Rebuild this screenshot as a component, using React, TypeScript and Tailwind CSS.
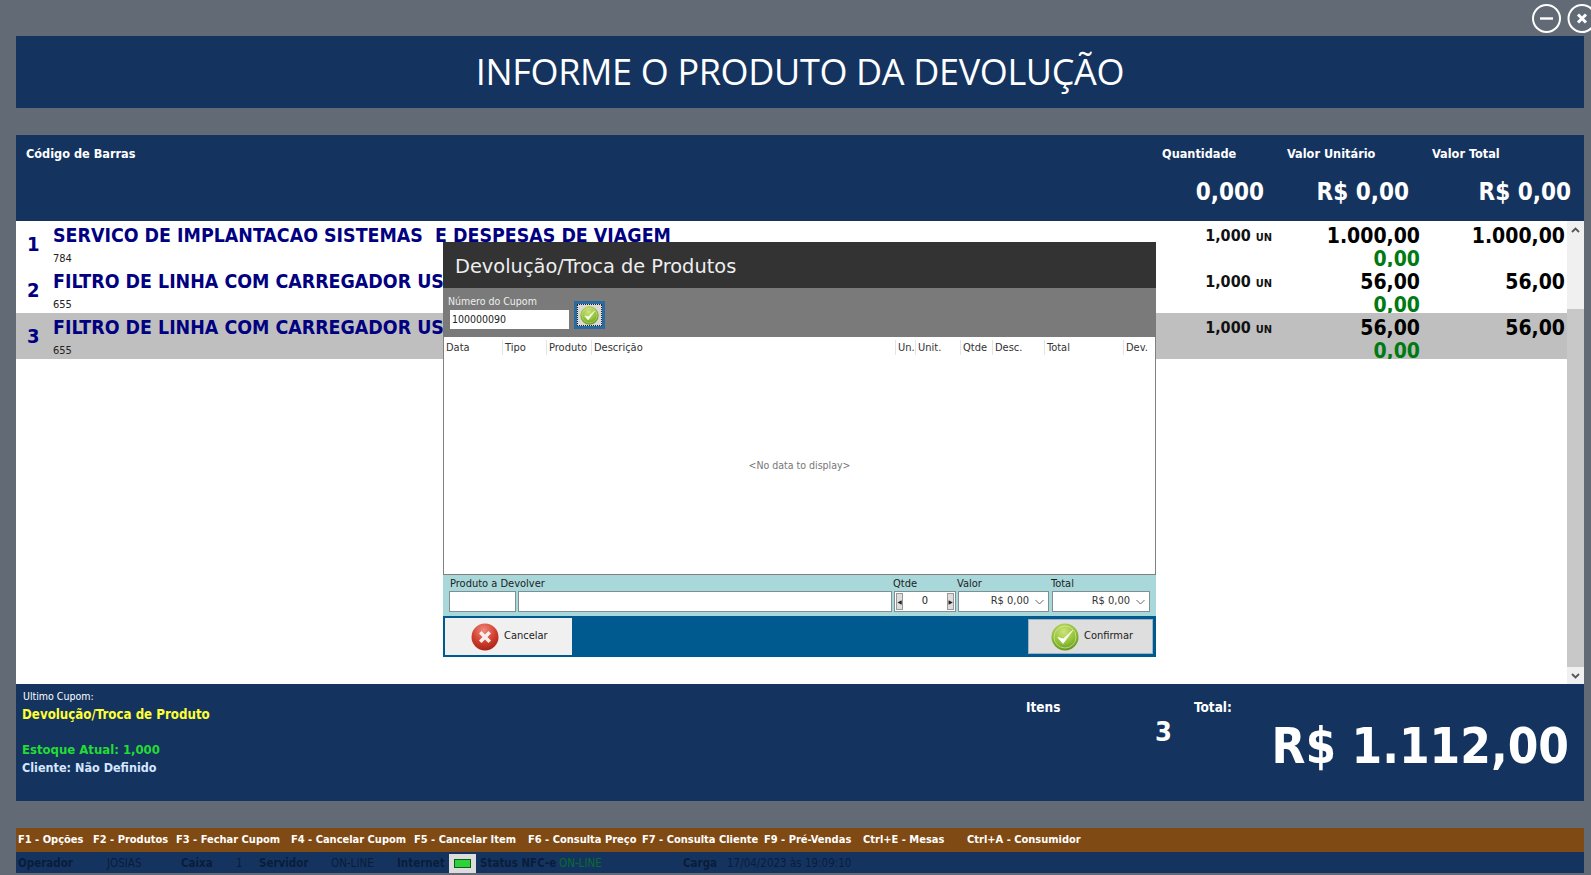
import React from "react";

const rows = [
  { n: "1", name: "SERVICO DE IMPLANTACAO SISTEMAS  E DESPESAS DE VIAGEM", code: "784", unit: "1.000,00", total: "1.000,00" },
  { n: "2", name: "FILTRO DE LINHA COM CARREGADOR USB", code: "655", unit: "56,00", total: "56,00" },
  { n: "3", name: "FILTRO DE LINHA COM CARREGADOR USB", code: "655", unit: "56,00", total: "56,00", selected: true },
];

const columns = [
  { label: "Data", className: "w-[59px]" },
  { label: "Tipo", className: "w-[44px]" },
  { label: "Produto", className: "w-[45px]" },
  { label: "Descrição", className: "w-[304px]" },
  { label: "Un.", className: "w-[20px]" },
  { label: "Unit.", className: "w-[45px]" },
  { label: "Qtde", className: "w-[32px]" },
  { label: "Desc.", className: "w-[52px]" },
  { label: "Total", className: "w-[79px]" },
  { label: "Dev.", className: "flex-1" },
];

const shortcuts = [
  { label: "F1 - Opções", className: "w-[75px]" },
  { label: "F2 - Produtos", className: "w-[83px]" },
  { label: "F3 - Fechar Cupom", className: "w-[115px]" },
  { label: "F4 - Cancelar Cupom", className: "w-[123px]" },
  { label: "F5 - Cancelar Item", className: "w-[114px]" },
  { label: "F6 - Consulta Preço", className: "w-[114px]" },
  { label: "F7 - Consulta Cliente", className: "w-[122px]" },
  { label: "F9 - Pré-Vendas", className: "w-[99px]" },
  { label: "Ctrl+E - Mesas", className: "w-[104px]" },
  { label: "Ctrl+A - Consumidor", className: "" },
];

const CheckIcon = ({ size, id }: { size: number; id: string }) => (
  <svg width={size} height={size} viewBox="0 0 28 28">
    <defs>
      <radialGradient id={id} cx="45%" cy="30%" r="75%">
        <stop offset="0%" stopColor="#cfe57a" />
        <stop offset="60%" stopColor="#8fbf34" />
        <stop offset="100%" stopColor="#5c8f1c" />
      </radialGradient>
    </defs>
    <circle cx="14" cy="14" r="13.5" fill={`url(#${id})`} />
    <circle cx="14" cy="14" r="11" fill="none" stroke="#e4f0b8" strokeOpacity="0.6" />
    <path d="M7 14.5l5 6 9.5-13-9.2 8.4z" fill="#fff" stroke="#f4f8e6" strokeWidth="1" strokeLinejoin="round" />
  </svg>
);

const CancelIcon = () => (
  <svg width="28" height="28" viewBox="0 0 28 28">
    <defs>
      <radialGradient id="redBall" cx="45%" cy="25%" r="80%">
        <stop offset="0%" stopColor="#ee8a7c" />
        <stop offset="55%" stopColor="#d2402f" />
        <stop offset="100%" stopColor="#a31e14" />
      </radialGradient>
    </defs>
    <circle cx="14" cy="14" r="13.5" fill="url(#redBall)" />
    <path d="M8 10.5l2.5-2.5 3.5 3.5 3.5-3.5 2.5 2.5-3.5 3.5 3.5 3.5-2.5 2.5-3.5-3.5-3.5 3.5-2.5-2.5 3.5-3.5z" fill="#f7eeee" />
  </svg>
);

const WindowButtons = () => (
  <div className="flex justify-end gap-[6px] -mr-[13px] pt-[4px] h-[36px]">
    <svg width="29" height="29" viewBox="0 0 29 29">
      <circle cx="14.5" cy="14.5" r="13.5" fill="none" stroke="#fff" strokeWidth="2" />
      <path d="M8 14.5h13" stroke="#fff" strokeWidth="2.4" />
    </svg>
    <svg width="30" height="29" viewBox="0 0 30 29">
      <circle cx="15" cy="14.5" r="13.5" fill="none" stroke="#fff" strokeWidth="2" />
      <path d="M11 10.5l8 8M19 10.5l-8 8" stroke="#fff" strokeWidth="3" />
    </svg>
  </div>
);

const ComboField = ({ value, className }: { value: string; className: string }) => (
  <div className={`flex items-center justify-end gap-[6px] h-[21px] bg-white border border-[#7f8f93] pr-[4px] text-[11px] text-[#333] ${className}`}>
    <span>{value}</span>
    <svg width="9" height="6" viewBox="0 0 9 6">
      <path d="M0.5 1l4 4 4-4" fill="none" stroke="#666" />
    </svg>
  </div>
);

const DevolucaoModal = () => (
  <div className="absolute left-[443px] top-[242px] w-[713px] h-[415px] flex flex-col">
    <div className="h-[46px] shrink-0 bg-[#333333] pl-[12px] pt-[3px] flex items-center text-[19.4px] text-[#eeeeee] font-['DejaVu_Sans',sans-serif]">
      Devolução/Troca de Produtos
    </div>
    <div className="h-[49px] shrink-0 bg-[#7a7a7a] flex items-start pl-[5px]">
      <div className="flex flex-col pt-[7px]">
        <span className="text-[10.5px] leading-[13px] text-[#eeeeee]">Número do Cupom</span>
        <div className="ml-[2px] mt-[2px] w-[119px] h-[19px] bg-white pl-[2px] text-[10.5px] leading-[19px] text-[#222]">100000090</div>
      </div>
      <div className="ml-[5px] mt-[13px] w-[31px] h-[28px] border-[3px] border-[#2a6a9e] bg-[#d9d9d9] outline-1 -outline-offset-4 outline-dotted outline-[#222] flex items-center justify-center">
        <CheckIcon size={19} id="greenSmall" />
      </div>
    </div>
    <div className="flex-1 flex flex-col bg-white border-x border-b border-[#808080]">
      <div className="h-[18px] flex text-[11px] leading-[15px] pt-[3px] text-[#333]">
        {columns.map((c) => (
          <div key={c.label} className={`pl-[2px] border-r border-[#e4e4e4] last:border-r-0 ${c.className}`}>
            {c.label}
          </div>
        ))}
      </div>
      <div className="flex-1 flex items-center justify-center pt-[2px] text-[10.5px] text-[#777]">{"<No data to display>"}</div>
    </div>
    <div className="h-[41px] shrink-0 bg-[#a9d8db] px-[6px] pt-[2px] text-[11px] text-[#222]">
      <div className="h-[14px] flex leading-[14px]">
        <span className="w-[444px] pl-[1px]">Produto a Devolver</span>
        <span className="w-[64px]">Qtde</span>
        <span className="w-[94px]">Valor</span>
        <span>Total</span>
      </div>
      <div className="flex gap-[2px]">
        <div className="w-[67px] h-[21px] bg-white border border-[#7f8f93]" />
        <div className="w-[374px] h-[21px] bg-white border border-[#7f8f93]" />
        <div className="w-[62px] h-[21px] bg-white border border-[#7f8f93] flex items-center justify-between px-[1px]">
          <span className="w-[7px] h-[17px] bg-[#dddddd] border border-[#999] flex items-center justify-center text-[6px] leading-none">◀</span>
          <span>0</span>
          <span className="w-[7px] h-[17px] bg-[#dddddd] border border-[#999] flex items-center justify-center text-[6px] leading-none">▶</span>
        </div>
        <ComboField value="R$ 0,00" className="w-[91px]" />
        <ComboField value="R$ 0,00" className="w-[98px] ml-[1px]" />
      </div>
    </div>
    <div className="h-[41px] shrink-0 bg-[#005a8f] flex items-center justify-between pl-[2px] pr-[3px] text-[11px] text-[#222]">
      <button className="w-[127px] h-[37px] bg-[#f0f0f0] flex items-center pl-[26px] gap-[5px]">
        <CancelIcon />
        Cancelar
      </button>
      <button className="w-[125px] h-[35px] bg-[#dedede] border border-[#a0b4c4] flex items-center pl-[22px] gap-[5px]">
        <CheckIcon size={28} id="greenBig" />
        Confirmar
      </button>
    </div>
  </div>
);

const ItemRow = ({ row }: { row: (typeof rows)[number] }) => (
  <div className={`h-[46px] shrink-0 flex overflow-hidden ${row.selected ? "bg-[#bfbfbf]" : "bg-white"}`}>
    <div className="w-[37px] shrink-0 pl-[11px] pt-[11px] text-[20px] leading-[24px] font-bold text-[#000080]">{row.n}</div>
    <div className="w-[1139px] shrink-0 pt-[2px]">
      <div className="text-[19.4px] leading-[26px] font-bold text-[#000080] whitespace-pre">{row.name}</div>
      <div className="text-[11px] leading-[14px] mt-[3px] text-[#222]">{row.code}</div>
    </div>
    <div className="w-[80px] shrink-0 pt-[3px] text-right whitespace-nowrap font-bold text-[#111]">
      <span className="text-[16px] leading-[22px]">1,000</span> <span className="text-[11px]">UN</span>
    </div>
    <div className="w-[148px] shrink-0 text-right font-bold text-[21px] leading-[23px] pt-[4px] text-black">
      <div>{row.unit}</div>
      <div className="text-[#007a12]">0,00</div>
    </div>
    <div className="w-[145px] shrink-0 text-right font-bold text-[21px] leading-[23px] pt-[4px] text-black">{row.total}</div>
  </div>
);

export default function App() {
  return (
    <div className="relative w-[1591px] h-[875px] overflow-hidden bg-[#626b75] pl-[16px] pr-[7px] font-['DejaVu_Sans_Condensed','DejaVu_Sans',sans-serif]">
      <WindowButtons />

      {/* Titulo */}
      <div className="h-[72px] bg-[#14345f] flex items-center justify-center text-[36px] tracking-[-0.35px] text-white font-['Open_Sans',sans-serif]">
        INFORME O PRODUTO DA DEVOLUÇÃO
      </div>

      {/* Cabecalho da lista */}
      <div className="mt-[27px] h-[86px] bg-[#14345f] text-white font-bold">
        <div className="flex h-[41px] pt-[11px] text-[12.6px] leading-[16px]">
          <span className="w-[1146px] pl-[10px]">Código de Barras</span>
          <span className="w-[125px]">Quantidade</span>
          <span className="w-[145px]">Valor Unitário</span>
          <span>Valor Total</span>
        </div>
        <div className="flex text-[24px] leading-[32px]">
          <span className="w-[1248px] text-right">0,000</span>
          <span className="w-[145px] text-right">R$ 0,00</span>
          <span className="w-[162px] text-right">R$ 0,00</span>
        </div>
      </div>

      {/* Itens */}
      <div className="h-[463px] flex bg-white">
        <div className="flex-1 min-w-0 flex flex-col">
          {rows.map((r) => (
            <ItemRow key={r.n} row={r} />
          ))}
        </div>
        <div className="w-[17px] shrink-0 bg-[#f0f0f0] flex flex-col">
          <div className="h-[88px] flex justify-center pt-[6px]">
            <svg width="9" height="6" viewBox="0 0 9 6">
              <path d="M1 5l3.5-3.5L8 5" fill="none" stroke="#555" strokeWidth="1.8" />
            </svg>
          </div>
          <div className="flex-1 bg-[#c8c8c8]" />
          <div className="h-[17px] flex justify-center pt-[6px]">
            <svg width="9" height="6" viewBox="0 0 9 6">
              <path d="M1 1l3.5 3.5L8 1" fill="none" stroke="#555" strokeWidth="1.8" />
            </svg>
          </div>
        </div>
      </div>

      {/* Totais */}
      <div className="h-[117px] bg-[#14345f] flex text-white">
        <div className="w-[1010px] pl-[6px] flex flex-col font-bold text-[13px] leading-[18px]">
          <span className="pl-[1px] pt-[5px] text-[10.5px] leading-[14px] font-normal">Ultimo Cupom:</span>
          <span className="mt-[3px] text-[13.2px] text-[#ffff33]">Devolução/Troca de Produto</span>
          <span className="mt-[17px] text-[#22dd33]">Estoque Atual: 1,000</span>
          <span className="text-[12.5px] text-[#d6e6ff]">Cliente: Não Definido</span>
        </div>
        <div className="w-[168px] pt-[14px] font-bold text-[13.5px] leading-[18px] flex flex-col">
          <span>Itens</span>
          <span className="text-right pr-[22px] pt-[1px] text-[27px] leading-[30px]">3</span>
        </div>
        <div className="flex-1 pt-[14px] pr-[15px] font-bold flex flex-col">
          <span className="text-[13.5px] leading-[18px]">Total:</span>
          <span className="text-right text-[49px] leading-[60px] mt-[1px]">R$ 1.112,00</span>
        </div>
      </div>

      {/* Atalhos */}
      <div className="mt-[27px] h-[24px] bg-[#7f4a14] flex items-center pl-[2px] pt-[1px] text-[11px] font-bold text-white whitespace-nowrap">
        {shortcuts.map((s) => (
          <span key={s.label} className={s.className}>
            {s.label}
          </span>
        ))}
      </div>

      {/* Status */}
      <div className="h-[21px] bg-[#14345f] flex items-center pl-[2px] pt-[2px] text-[11.5px] text-[#0a1c3c] whitespace-nowrap">
        <span className="w-[89px] font-bold">Operador</span>
        <span className="w-[74px]">JOSIAS</span>
        <span className="w-[55px] font-bold">Caixa</span>
        <span className="w-[23px]">1</span>
        <span className="w-[72px] font-bold">Servidor</span>
        <span className="w-[66px]">ON-LINE</span>
        <span className="w-[52px] font-bold">Internet</span>
        <span className="w-[27px] h-[19px] mr-[4px] bg-[#dcdcdc] flex items-center justify-center">
          <svg width="17" height="9" viewBox="0 0 17 9">
            <rect width="17" height="9" fill="#0b5f1e" />
            <rect x="1" y="1" width="15" height="7" fill="#2fd13a" />
          </svg>
        </span>
        <span className="w-[79px] font-bold">Status NFC-e</span>
        <span className="w-[124px] text-[#0a6b2e]">ON-LINE</span>
        <span className="w-[44px] font-bold">Carga</span>
        <span>17/04/2023 às 19:09:10</span>
      </div>

      <DevolucaoModal />
    </div>
  );
}
